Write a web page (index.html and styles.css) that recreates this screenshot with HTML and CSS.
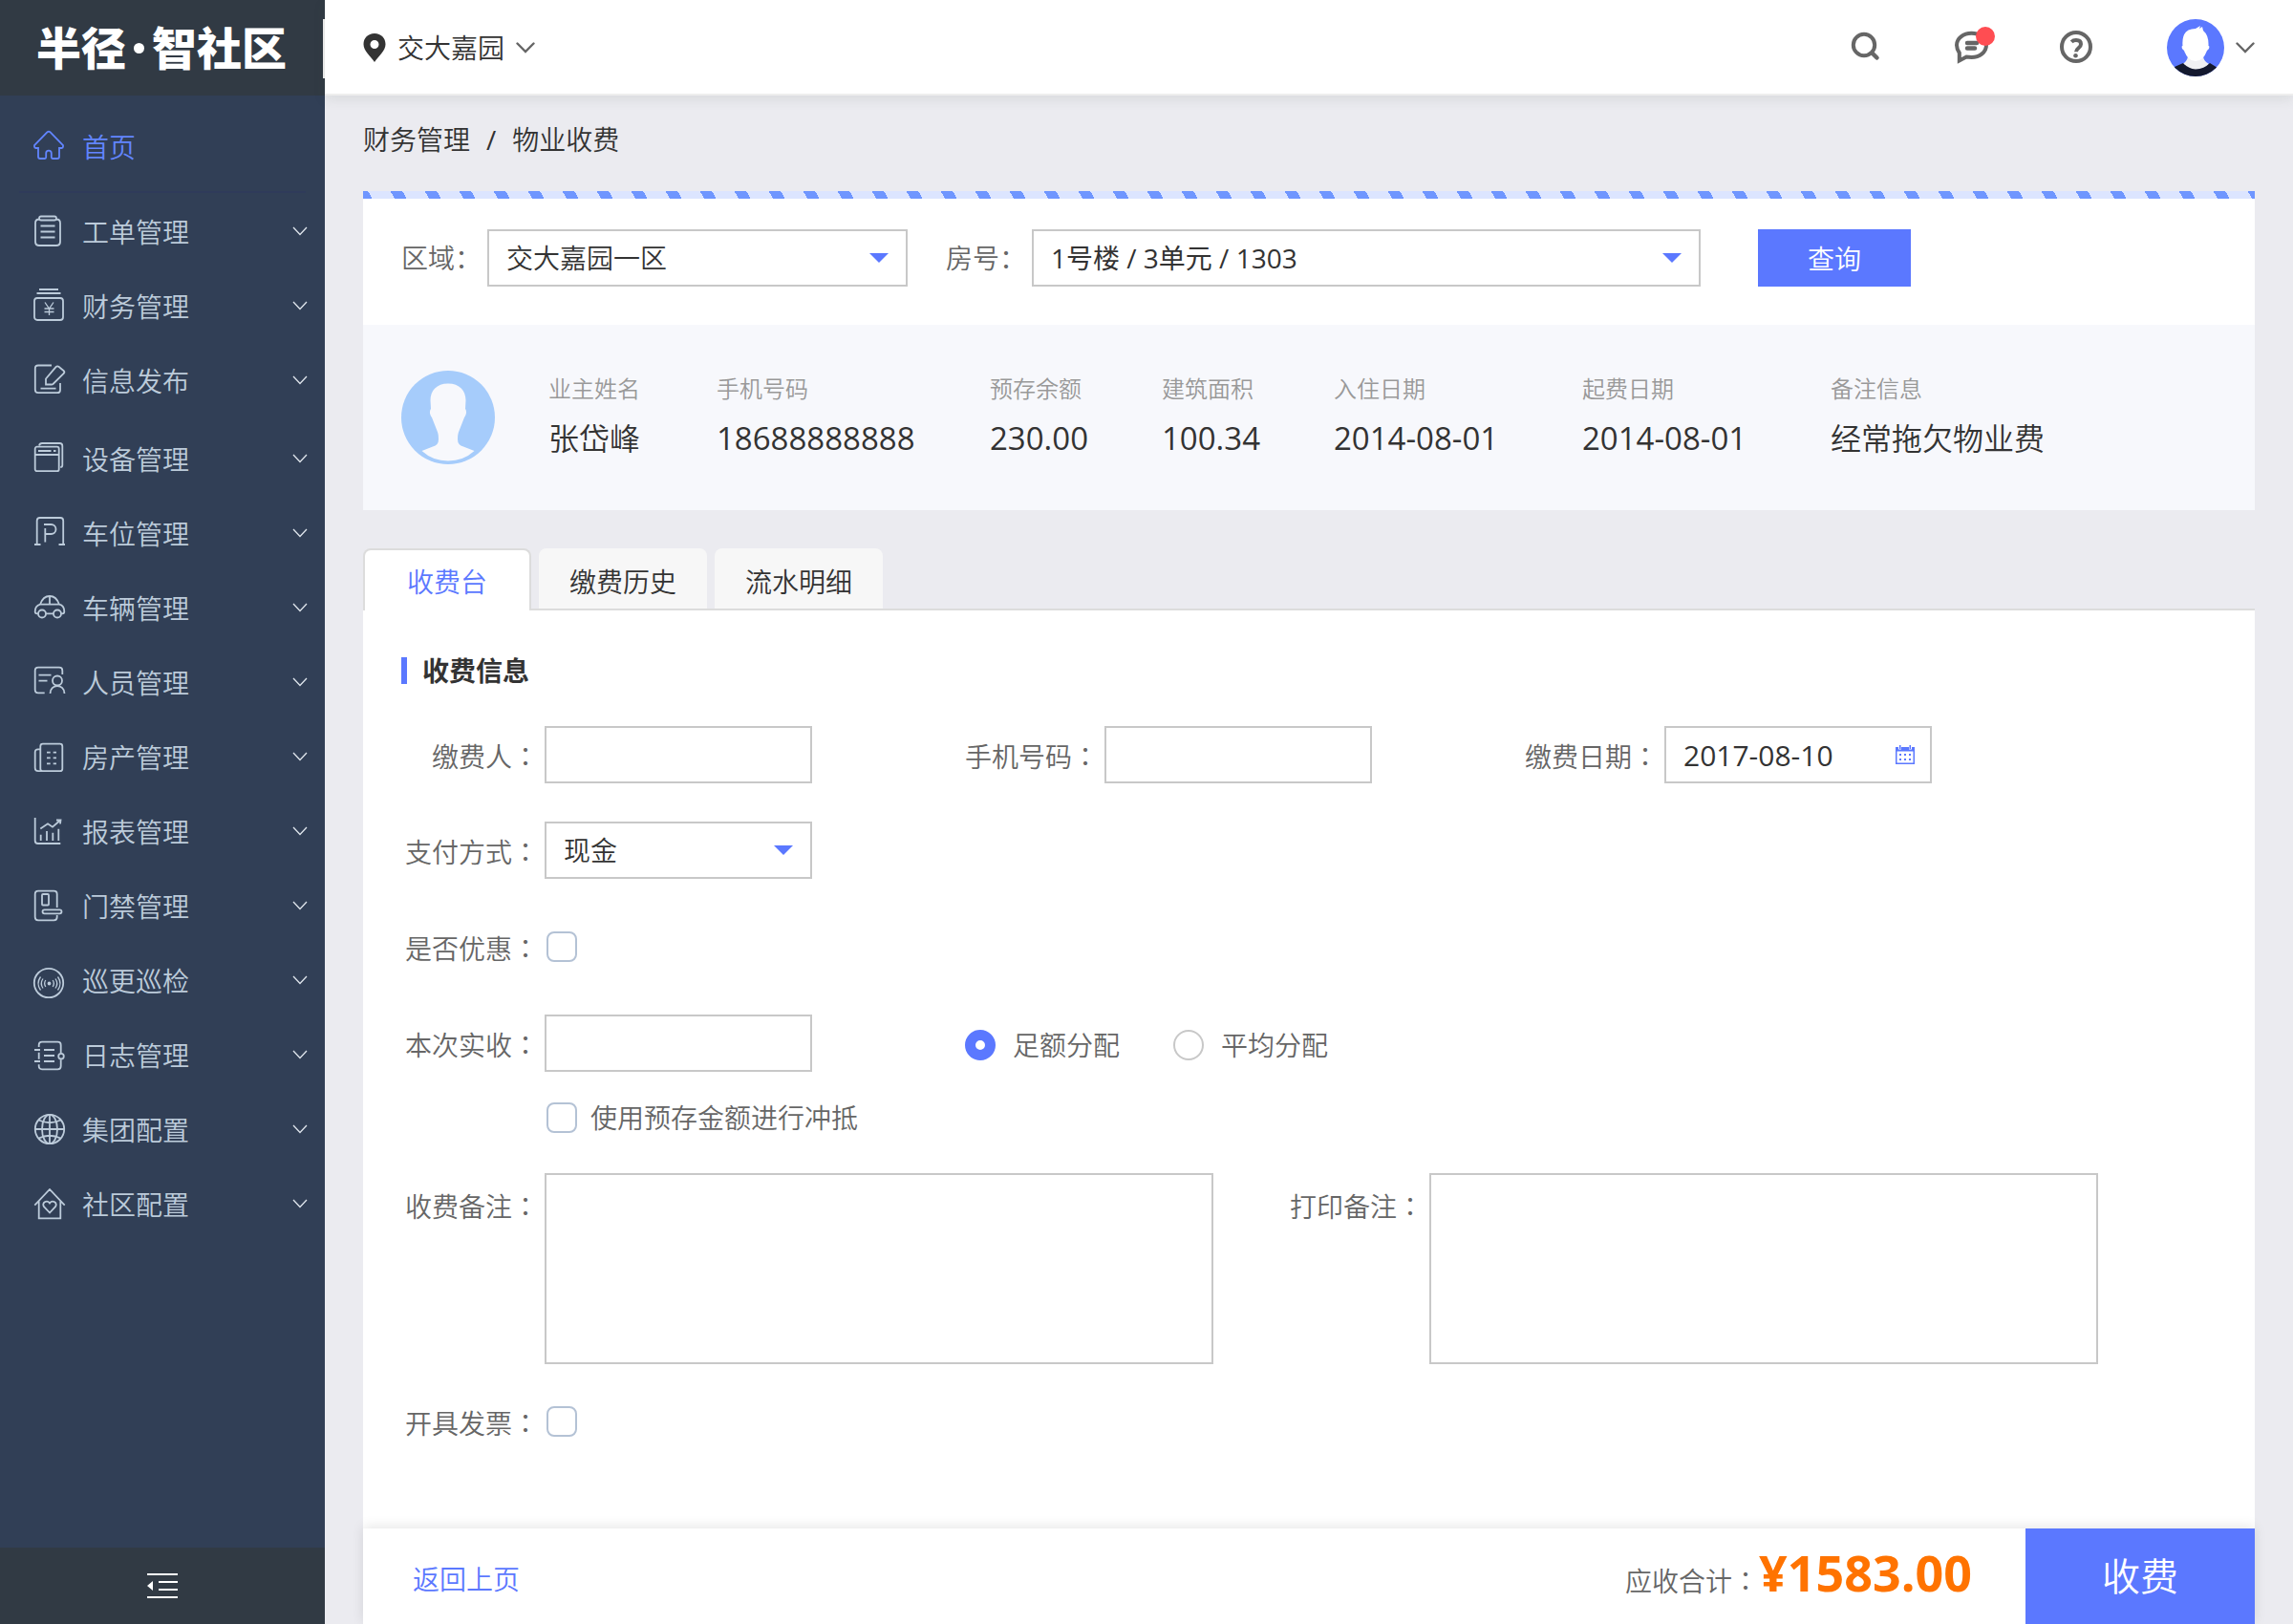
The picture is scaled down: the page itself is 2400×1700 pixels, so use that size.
FILE: index.html
```html
<!DOCTYPE html>
<html lang="zh-CN">
<head>
<meta charset="utf-8">
<meta name="viewport" content="width=device-width, initial-scale=1">
<title>物业收费 - 半径·智社区</title>
<link rel="stylesheet" href="styles.css">
</head>
<body>
<svg class="sprite" aria-hidden="true">
  <symbol id="chevron" viewBox="0 0 16 10"><path d="M1 1l7 7.500 7-7.500"/></symbol>
  <symbol id="chevron-bold" viewBox="0 0 20 12"><path d="M1.500 1.500L10 10l8.500-8.500"/></symbol>
</svg>
<div class="app">
  <aside class="sidebar">
    <div class="brand"><span>半径</span><i class="brand-dot"></i><span>智社区</span></div>
    <nav class="nav">
      <a class="nav-item nav-home" href="#">
        <svg class="nav-icon" viewBox="0 0 34 34"><path d="M15.600 2.200L2 16v1.600Q2 19 3.500 19H6v9q0 2 2 2h5q1.200 0 1.200-1.500v-4a2.800 2.800 0 0 1 5.600 0v4q0 1.500 1.200 1.500h5q2 0 2-2v-9h2.500q1.500 0 1.500-1.400V16L18.400 2.200q-1.400-1.200-2.800 0z"/></svg>
        <span>首页</span>
      </a>
      <ul class="nav-list">
        <li><a class="nav-item" href="#"><svg class="nav-icon" viewBox="0 0 34 34"><path d="M7 4.500q-4 0-4 4V28q0 4 4 4h18q4 0 4-4V8.500q0-4-4-4M9 1.500h14q2 0 2 2t-2 2H9q-2 0-2-2t2-2zM8.500 11.500h15M8.500 17.500h15M8.500 23.500h15"/></svg><span>工单管理</span><svg class="nav-arrow"><use href="#chevron"/></svg></a></li>
        <li><a class="nav-item" href="#"><svg class="nav-icon" viewBox="0 0 34 34"><rect x="2" y="9" width="30" height="23" rx="3"/><path d="M7 0h20M4.500 4h25"/><path class="fine" d="M13 13.500l4.500 6.500 4.500-6.500M12.500 20h10M12.500 23.500h10M17.500 20v7"/></svg><span>财务管理</span><svg class="nav-arrow"><use href="#chevron"/></svg></a></li>
        <li><a class="nav-item" href="#"><svg class="nav-icon" viewBox="0 0 34 34"><path d="M20 1.500H6q-3.200 0-3.200 3.200V27q0 3.200 3.200 3.200h20q3 0 3-3V20M8.500 25.700h16M14 21.500v-6L24.500 3.200q1.500-1.600 3.200-.2l4.800 4q1.600 1.400.2 3L21.500 21q-.6.500-1.500.5z"/></svg><span>信息发布</span><svg class="nav-arrow"><use href="#chevron"/></svg></a></li>
      </ul>
      <ul class="nav-list">
        <li><a class="nav-item" href="#"><svg class="nav-icon" viewBox="0 0 34 34"><rect x="2.700" y="4.700" width="25" height="25.500" rx="2"/><path d="M2.700 13h25M6 9h13.500M22 9h2.500M7 3.500Q7.500 1 10 1h18.500q2.800 0 2.800 2.800V24q0 2-2 2"/></svg><span>设备管理</span><svg class="nav-arrow"><use href="#chevron"/></svg></a></li>
        <li><a class="nav-item" href="#"><svg class="nav-icon" viewBox="0 0 34 34"><path d="M2 29h6.500M27.500 29H34M4.700 29V4q0-3 3-3h21.500q3 0 3 3v25M12 8h7.500a5 5 0 0 1 0 10h-6M13.300 12v14.500"/></svg><span>车位管理</span><svg class="nav-arrow"><use href="#chevron"/></svg></a></li>
        <li><a class="nav-item" href="#"><svg class="nav-icon" viewBox="0 0 34 34"><circle cx="10" cy="23.500" r="4"/><circle cx="26" cy="23.500" r="4"/><path d="M6 23.300H4.700q-2 0-2-2c0-4.300 2.300-6.800 5.300-7.600C10 8 13 5 18 5s8 3 10 8.700c3.300.8 5.300 3.300 5.300 7.600q0 2-2 2H30M14 23.300h8M8 13.700h20M18 5v8.700"/></svg><span>车辆管理</span><svg class="nav-arrow"><use href="#chevron"/></svg></a></li>
        <li><a class="nav-item" href="#"><svg class="nav-icon" viewBox="0 0 34 34"><path d="M12.700 28.300H6q-3.300 0-3.300-3.300V5q0-3.300 3.300-3.300h22q3.300 0 3.300 3.300v4M6.500 9.700h13M6.500 15.700h9M18.500 29c0-5 3.500-7.800 7.500-7.800s7.500 2.800 7.500 7.800"/><circle cx="26" cy="15.500" r="5"/></svg><span>人员管理</span><svg class="nav-arrow"><use href="#chevron"/></svg></a></li>
        <li><a class="nav-item" href="#"><svg class="nav-icon" viewBox="0 0 34 34"><rect x="8.300" y="3.700" width="23" height="28.500" rx="2.500"/><path d="M8.300 9.300H6q-3.300 0-3.300 3V29q0 3.200 3.300 3.200h4M15 12.700h3.700M21.700 12.700H25M15 18.300h3.700M21.700 18.300H25M15 24.300h3.700M21.700 24.300H25"/></svg><span>房产管理</span><svg class="nav-arrow"><use href="#chevron"/></svg></a></li>
        <li><a class="nav-item" href="#"><svg class="nav-icon" viewBox="0 0 34 34"><path d="M2.700 3v24q0 3 3 3h23.600M8.700 20.700V27M15 17v10M21.300 18.700V27M27.300 14.700V27M8.300 14.500L16 9.300l5 3.400L28.700 6M25 5.500h4.500l-.5 4"/></svg><span>报表管理</span><svg class="nav-arrow"><use href="#chevron"/></svg></a></li>
        <li><a class="nav-item" href="#"><svg class="nav-icon" viewBox="0 0 34 34"><path d="M25.700 19V5q0-3.300-3.300-3.300H6Q2.700 1.700 2.700 5v24q0 3.300 3.300 3.300h16.400q3.300 0 3.300-3.300v-2"/><rect x="10" y="5" width="7" height="11.500" rx="1"/><rect x="10.500" y="21.300" width="20" height="4" rx="2"/></svg><span>门禁管理</span><svg class="nav-arrow"><use href="#chevron"/></svg></a></li>
        <li><a class="nav-item" href="#"><svg class="nav-icon" viewBox="0 0 34 34"><circle cx="17" cy="20" r="15.200"/><circle cx="17.500" cy="20.500" r="1"/><path class="fine" d="M13.800 17q-2.300 3.500 0 7M11 15.500q-3.500 5 0 10M8.500 13.500q-5 7 0 14M21.200 17q2.300 3.500 0 7M24 15.500q3.500 5 0 10M26.500 13.500q5 7 0 14"/></svg><span>巡更巡检</span><svg class="nav-arrow"><use href="#chevron"/></svg></a></li>
        <li><a class="nav-item" href="#"><svg class="nav-icon" viewBox="0 0 34 34"><path d="M6.700 9V7q0-3.300 3.300-3.300h16.400q3.300 0 3.300 3.300v8M29.700 22.300V29q0 3.300-3.300 3.300H10q-3.300 0-3.300-3.300v-1.700M6.700 14.700v7M2 12h6M2 24h6M12 12h11M12 18h11M12 24h11"/><circle cx="30" cy="18.700" r="2.800"/></svg><span>日志管理</span><svg class="nav-arrow"><use href="#chevron"/></svg></a></li>
        <li><a class="nav-item" href="#"><svg class="nav-icon" viewBox="0 0 34 34"><circle cx="18" cy="17" r="15.200"/><ellipse cx="18" cy="17" rx="8" ry="15.200"/><path d="M18 2v30M3 17h30M6.500 7.500Q18 13 29.500 7.500M6.500 26.500Q18 21 29.500 26.500"/></svg><span>集团配置</span><svg class="nav-arrow"><use href="#chevron"/></svg></a></li>
        <li><a class="nav-item" href="#"><svg class="nav-icon" viewBox="0 0 34 34"><path d="M2.300 18.700L18 2l15.700 16.700M6.700 14.500v17.800h22.600V14.500M18 26.500l-6-6.300c-2.800-4 3-7.700 6-3.700 3-4 8.800-.3 6 3.700z"/></svg><span>社区配置</span><svg class="nav-arrow"><use href="#chevron"/></svg></a></li>
      </ul>
    </nav>
    <button class="collapse" type="button" aria-label="收起菜单">
      <svg class="collapse-icon" viewBox="0 0 32 26"><path d="M0 0h32v2H0zM12 8h20v2H12zM12 16h20v2H12zM0 24h32v2H0zM6 8v10L0 13z"/></svg>
    </button>
  </aside>

  <div class="page">
    <header class="topbar">
      <button class="community" type="button">
        <svg class="pin" viewBox="0 0 24 30"><path fill-rule="evenodd" d="M12 0C5 0 .5 5 .5 11.200.5 18.500 7.500 23 12 30c4.500-7 11.500-11.500 11.500-18.800C23.500 5 19 0 12 0zm0 7a4.500 4.500 0 1 1 0 9 4.500 4.500 0 0 1 0-9z"/></svg>
        <span>交大嘉园</span>
        <svg class="chevron"><use href="#chevron-bold"/></svg>
      </button>
      <div class="tools">
        <button class="tool" type="button" aria-label="搜索">
          <svg class="tool-icon" viewBox="0 0 36 36"><circle cx="15" cy="15" r="11.200"/><path class="thick" d="M23.500 23.500l5 5"/></svg>
        </button>
        <button class="tool" type="button" aria-label="消息">
          <svg class="tool-icon" viewBox="0 0 36 36"><path d="M4.800 31.500v-8.200C3.200 20.800 2 18.500 2 15.300 2 8 9 2.800 17.500 2.800S33 8 33 15.300 26 28 17.500 28l-5.300-.5z"/><path class="thick" d="M13 13h10M13 18.500h8"/></svg>
          <span class="tool-dot"></span>
        </button>
        <button class="tool" type="button" aria-label="帮助">
          <svg class="tool-icon" viewBox="0 0 36 36"><circle cx="17" cy="17" r="15"/><path d="M12.200 11.800Q14 10 17 10q5 0 5 4.200 0 2-2.500 4t-2.500 4"/><circle class="dot" cx="16.500" cy="26.300" r="2.300"/></svg>
        </button>
        <button class="account" type="button" aria-label="我的账户">
          <svg class="account-face" viewBox="0 0 60 60">
            <defs><clipPath id="face-clip"><circle cx="30" cy="30" r="30"/></clipPath></defs>
            <g clip-path="url(#face-clip)">
              <rect width="60" height="60" fill="#5b78ff"/>
              <path d="M22 38h16q0 6 6 9l-6 8H22l-6-8q6-3 6-9z" fill="#f1f1f3"/>
              <path d="M8 50l9-4q5 6 13 6.500Q39 52 45 46l8 5v9H8z" fill="#14192e"/>
              <path d="M30 10l5-3-1 3 3-2 1 4q6 5 5.500 16 1.500 0 .5 3l-2 2q-4 11-12 11t-12-11l-2-2q-1-3 .5-3Q15 10 30 10z" fill="#fff"/>
            </g>
          </svg>
          <svg class="chevron"><use href="#chevron-bold"/></svg>
        </button>
      </div>
    </header>

    <main class="content">
      <nav class="crumbs" aria-label="面包屑"><a href="#">财务管理</a><span>/</span><a href="#">物业收费</a></nav>

      <section class="lookup">
        <form class="filter">
          <label class="filter-label" for="area">区域：</label>
          <select class="control area" id="area"><option>交大嘉园一区</option></select>
          <label class="filter-label" for="room">房号：</label>
          <select class="control room" id="room"><option>1号楼 / 3单元 / 1303</option></select>
          <button class="query" type="button">查询</button>
        </form>
        <div class="owner">
          <svg class="owner-face" viewBox="0 0 98 98"><circle cx="49" cy="49" r="49" fill="#a6ccfb"/><path fill="#f7f8fc" d="M49 13.500C37 13.500 30.500 21 30.500 31l.5 9c-1.500 2-1.500 6 1 9l5.500 14q1.500 3 1.500 9 0 6-6 7.500L21.500 84Q33 94.500 49 94.500T76.500 84L65 79.500Q59 78 59 72q0-6 1.500-9L66 49c2.500-3 2.500-7 1-9l.5-9c0-10-6.500-17.500-18.500-17.500z"/></svg>
          <dl class="facts">
            <div><dt>业主姓名</dt><dd>张岱峰</dd></div>
            <div><dt>手机号码</dt><dd class="num">18688888888</dd></div>
            <div><dt>预存余额</dt><dd class="num">230.00</dd></div>
            <div><dt>建筑面积</dt><dd class="num">100.34</dd></div>
            <div><dt>入住日期</dt><dd class="num">2014-08-01</dd></div>
            <div><dt>起费日期</dt><dd class="num">2014-08-01</dd></div>
            <div><dt>备注信息</dt><dd>经常拖欠物业费</dd></div>
          </dl>
        </div>
      </section>

      <div class="tabs" role="tablist">
        <button class="tab active" type="button" role="tab" aria-selected="true">收费台</button>
        <button class="tab" type="button" role="tab" aria-selected="false">缴费历史</button>
        <button class="tab" type="button" role="tab" aria-selected="false">流水明细</button>
      </div>

      <form class="panel">
        <h2 class="panel-title">收费信息</h2>
        <div class="row">
          <div class="field"><label for="payer">缴费人<span class="colon">：</span></label><input class="control" id="payer" type="text"></div>
          <div class="field"><label for="phone">手机号码<span class="colon">：</span></label><input class="control" id="phone" type="tel"></div>
          <div class="field"><label for="paydate">缴费日期<span class="colon">：</span></label>
            <span class="date">
              <input class="control" id="paydate" type="text" value="2017-08-10">
              <svg class="calendar" viewBox="0 0 20 20"><path fill-rule="evenodd" d="M0 2h3v2.500h3V2h8v2.500h3V2h3v18H0zM1.500 6.500v12h17v-12zM4 0h1.500v4H4zM14.500 0H16v4h-1.500zM4 9h2v2H4zM9 9h2v2H9zM14 9h2v2h-2zM4 14h2v2H4zM9 14h2v2H9zM14 14h2v2h-2z"/></svg>
            </span>
          </div>
        </div>
        <div class="row">
          <div class="field"><label for="method">支付方式<span class="colon">：</span></label><select class="control" id="method"><option>现金</option></select></div>
        </div>
        <div class="row discount-row">
          <div class="field"><label for="discount">是否优惠<span class="colon">：</span></label><input class="check" id="discount" type="checkbox"></div>
        </div>
        <div class="row">
          <div class="field"><label for="received">本次实收<span class="colon">：</span></label><input class="control" id="received" type="text"></div>
          <div class="choices">
            <label class="choice"><input class="radio" type="radio" name="split" checked>足额分配</label>
            <label class="choice"><input class="radio" type="radio" name="split">平均分配</label>
          </div>
        </div>
        <div class="row offset-row">
          <label class="offset"><input class="check" type="checkbox">使用预存金额进行冲抵</label>
        </div>
        <div class="row notes">
          <div class="field tall"><label for="note">收费备注<span class="colon">：</span></label><textarea class="control" id="note"></textarea></div>
          <div class="field tall"><label for="print-note">打印备注<span class="colon">：</span></label><textarea class="control" id="print-note"></textarea></div>
        </div>
        <div class="row">
          <div class="field"><label for="invoice">开具发票<span class="colon">：</span></label><input class="check" id="invoice" type="checkbox"></div>
        </div>
      </form>

      <footer class="settle">
        <a class="back" href="#">返回上页</a>
        <p class="total">应收合计<span class="colon">：</span><strong>¥1583.00</strong></p>
        <button class="charge" type="button">收费</button>
      </footer>
    </main>
  </div>
</div>
</body>
</html>
```

FILE: styles.css
```css
:root {
  --blue: #5b78ff;
  --ink: #333;
  --muted: #666;
  --line: #c8c8c8;
  --font: "Open Sans", "Noto Sans CJK SC", sans-serif;
}

* {
  box-sizing: border-box;
}

body {
  margin: 0;
  background: #ebebf0;
  color: var(--ink);
  font-family: var(--font);
  font-size: 28px;
  font-weight: 350;
  line-height: 40px;
}

button,
input,
select,
textarea {
  margin: 0;
  padding: 0;
  border: 0;
  background: none;
  color: inherit;
  font: inherit;
}

button {
  cursor: pointer;
}

a {
  color: inherit;
  text-decoration: none;
}

.sprite {
  position: absolute;
  width: 0;
  height: 0;
}

.app {
  display: grid;
  grid-template-columns: 340px minmax(0, 1fr);
  min-height: 100vh;
}

/* Sidebar */
.sidebar {
  display: flex;
  flex-direction: column;
  background: #313f56;
  color: #bccbda;
}

.brand {
  display: flex;
  align-items: center;
  gap: 8px;
  height: 100px;
  padding-left: 38px;
  background: linear-gradient(#f0f0f0, #f0f0f0) right 20px / 2px 62px no-repeat #313a44;
  color: #fff;
  font-size: 47px;
  font-style: oblique 6deg;
  font-weight: 900;
}

.brand-dot {
  width: 11px;
  height: 11px;
  border-radius: 50%;
  background: #fff;
}

.nav {
  flex: 1;
}

.nav-list {
  margin: 0;
  padding: 1px 0 3px;
  list-style: none;
}

.nav-item {
  display: flex;
  align-items: center;
  gap: 18px;
  height: 78px;
  padding: 0 18px 0 34px;
}

.nav-item span {
  padding-top: 2px;
}

.nav-home {
  height: 102px;
  padding-top: 4px;
  background: linear-gradient(#2f3b5a, #2f3b5a) center bottom / 300px 2px no-repeat;
  color: #6285ff;
}

.nav-icon {
  width: 34px;
  height: 34px;
  overflow: visible;
  fill: none;
  stroke: currentColor;
  stroke-width: 1.8;
}

.nav-icon .fine {
  stroke-width: 1.3;
}

.nav-arrow {
  width: 16px;
  height: 10px;
  margin-left: auto;
  fill: none;
  stroke: #dfe5ec;
  stroke-width: 1.3;
}

.collapse {
  display: grid;
  place-items: center;
  height: 80px;
  background: #313a44;
}

.collapse-icon {
  width: 32px;
  height: 26px;
  fill: #fff;
}

/* Top bar */
.page {
  display: flex;
  flex-direction: column;
}

.topbar {
  display: flex;
  align-items: center;
  justify-content: space-between;
  height: 100px;
  padding: 2px 40px 0;
  border-bottom: 2px solid #eee;
  background: #fff;
  box-shadow: 0 4px 12px rgba(60, 80, 60, 0.1);
}

.community,
.account {
  display: flex;
  align-items: center;
  gap: 12px;
}

.pin {
  width: 24px;
  height: 30px;
  fill: var(--ink);
}

.chevron {
  width: 20px;
  height: 12px;
  fill: none;
  stroke: var(--muted);
  stroke-width: 2.4;
  stroke-linecap: round;
}

.tools {
  display: flex;
  align-items: center;
}

.tool {
  position: relative;
  width: 36px;
  height: 36px;
  margin-right: 74px;
}

.tool:nth-of-type(3) {
  margin-right: 76px;
}

.tool-icon {
  display: block;
  width: 36px;
  height: 36px;
  overflow: visible;
  fill: none;
  stroke: var(--muted);
  stroke-width: 4;
}

.tool-icon .thick {
  stroke-width: 4.5;
  stroke-linecap: round;
}

.tool-icon .dot {
  fill: var(--muted);
  stroke: none;
}

.tool-dot {
  position: absolute;
  top: -4px;
  right: -6px;
  width: 20px;
  height: 20px;
  border-radius: 50%;
  background: #ff4d52;
}

.account-face {
  width: 60px;
  height: 60px;
}

/* Content */
.content {
  display: flex;
  flex: 1;
  flex-direction: column;
  padding: 26px 40px 0;
}

.crumbs {
  display: flex;
  gap: 17px;
  margin-bottom: 34px;
}

.crumbs span {
  font-weight: 400;
}

.lookup {
  margin-bottom: 40px;
  background: #fff;
}

.lookup::before {
  content: "";
  display: block;
  height: 8px;
  background: linear-gradient(61deg, #dce5ff 14px, #6f96ff 14px 25px, #dce5ff 25px) 17px 0 / 36px 8px;
}

.filter {
  display: flex;
  align-items: center;
  padding: 32px 40px 40px;
}

.filter-label {
  width: 90px;
  color: var(--muted);
}

.control {
  width: 280px;
  height: 60px;
  padding: 0 18px;
  border: 2px solid var(--line);
  border-radius: 0;
  background-color: #fff;
  color: var(--ink);
}

select.control {
  appearance: none;
  background-image: url("data:image/svg+xml,%3Csvg xmlns='http://www.w3.org/2000/svg' width='20' height='10'%3E%3Cpath d='M0 0h20L10 10z' fill='%235b78ff'/%3E%3C/svg%3E");
  background-repeat: no-repeat;
  background-position: right 18px center;
}

.area {
  width: 440px;
  margin-right: 40px;
}

.room {
  width: 700px;
  margin-right: 60px;
  font-weight: 400;
}

.query {
  width: 160px;
  height: 60px;
  padding-top: 2px;
  background: var(--blue);
  color: #fff;
}

.owner {
  display: flex;
  align-items: center;
  gap: 56px;
  min-height: 194px;
  padding: 0 40px;
  background: #f7f8fc;
}

.owner-face {
  width: 98px;
  height: 98px;
}

.facts {
  display: grid;
  grid-template-columns: 176px 286px 180px 180px 260px 260px auto;
  margin: 0;
  padding-bottom: 4px;
}

.facts dt {
  color: #999;
  font-size: 24px;
}

.facts dd {
  margin: 8px 0 0;
  font-size: 32px;
  line-height: 48px;
}

.facts .num {
  font-size: 33px;
  font-weight: 400;
}

/* Tabs */
.tabs {
  display: flex;
  gap: 8px;
  height: 65px;
  background: linear-gradient(#dcdcdc, #dcdcdc) left bottom / 100% 2px no-repeat;
}

.tab {
  width: 176px;
  height: 63px;
  padding-top: 6px;
  border-radius: 8px 8px 0 0;
  background: #f7f7f7;
}

.tab.active {
  height: 65px;
  padding-top: 2px;
  border: 2px solid #dcdcdc;
  border-bottom: 0;
  background: #fff;
  color: var(--blue);
}

/* Charge form */
.panel {
  flex: 1;
  padding: 43px 40px 40px 44px;
  background: #fff;
}

.panel-title {
  margin: 0 0 38px -4px;
  padding-left: 22px;
  background: linear-gradient(var(--blue), var(--blue)) left center / 6px 28px no-repeat;
  font-size: 28px;
  font-weight: 700;
}

.row {
  display: flex;
  flex-wrap: wrap;
  min-height: 60px;
  margin-bottom: 40px;
  color: var(--muted);
}

.field {
  display: flex;
  align-items: center;
  min-width: 586px;
}

.field > label {
  flex: none;
  width: 140px;
  margin-right: 6px;
  padding-top: 2px;
  text-align: right;
  white-space: nowrap;
}

/* Keep the full-width colon centred in its cell */
.colon {
  font-family: "Noto Sans CJK TC", sans-serif;
  font-feature-settings: "locl" 0;
}

.date {
  position: relative;
}

.date .control {
  font-size: 30px;
  font-weight: 400;
}

.calendar {
  position: absolute;
  top: 20px;
  right: 18px;
  width: 20px;
  height: 20px;
  fill: var(--blue);
}

.check {
  flex: none;
  appearance: none;
  width: 32px;
  height: 32px;
  margin-left: 2px;
  border: 2px solid #b4c2d5;
  border-radius: 8px;
  background: #fff;
}

.discount-row {
  min-height: 62px;
}

.choices {
  display: flex;
  align-items: center;
  gap: 56px;
}

.choice {
  display: flex;
  align-items: center;
  gap: 18px;
  padding-top: 4px;
}

.radio {
  appearance: none;
  width: 32px;
  height: 32px;
  border: 2px solid var(--line);
  border-radius: 50%;
  background: #fff;
}

.radio:checked {
  border: 11px solid var(--blue);
}

.offset-row {
  min-height: 32px;
  margin: -12px 0 38px;
}

.offset {
  display: flex;
  align-items: center;
  gap: 14px;
  margin-left: 146px;
}

.notes {
  gap: 80px;
  margin-bottom: 30px;
}

.tall {
  align-items: flex-start;
}

.field.tall > label {
  padding-top: 14px;
}

.tall .control {
  display: block;
  width: 700px;
  height: 200px;
  padding: 12px 18px;
  resize: none;
}

/* Settlement bar */
.settle {
  display: flex;
  align-items: center;
  height: 100px;
  background: #fff;
  box-shadow: 0 -2px 12px rgba(0, 0, 0, 0.1);
}

.back {
  margin-right: auto;
  padding: 6px 0 0 52px;
  color: var(--blue);
}

.total {
  margin: 0;
  color: var(--muted);
}

.total strong {
  color: #ff7300;
  font-size: 52px;
  font-weight: 700;
}

.charge {
  align-self: stretch;
  width: 240px;
  margin-left: 56px;
  background: var(--blue);
  color: #fff;
  font-size: 40px;
}
```
